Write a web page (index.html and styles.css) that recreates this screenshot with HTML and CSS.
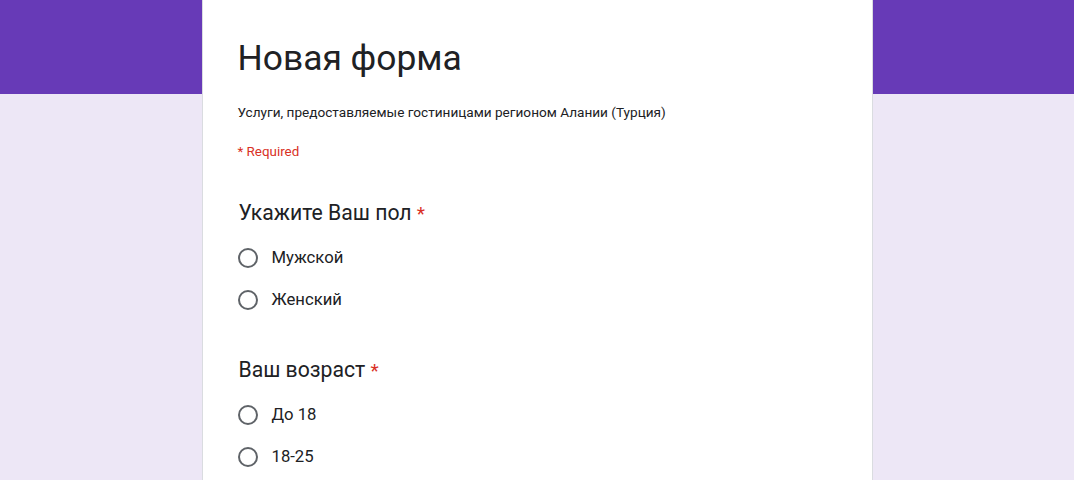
FILE: index.html
```html
<!DOCTYPE html>
<html lang="ru">
<head>
<meta charset="utf-8">
<title>Новая форма</title>
<link rel="stylesheet" href="styles.css">
</head>
<body>
<main class="card">
  <h1 class="title">Новая форма</h1>
  <p class="desc">Услуги, предоставляемые гостиницами регионом Алании (Турция)</p>
  <p class="required">* Required</p>

  <section class="question">
    <h2 class="q-title">Укажите Ваш пол <span class="star">*</span></h2>
    <label class="option"><span class="radio"></span><span class="opt-text">Мужской</span></label>
    <label class="option"><span class="radio"></span><span class="opt-text">Женский</span></label>
  </section>

  <section class="question">
    <h2 class="q-title">Ваш возраст <span class="star">*</span></h2>
    <label class="option"><span class="radio"></span><span class="opt-text">До 18</span></label>
    <label class="option"><span class="radio"></span><span class="opt-text">18-25</span></label>
  </section>
</main>
</body>
</html>
```

FILE: styles.css
```css
html, body {
  margin: 0;
  padding: 0;
}
body {
  height: 480px;
  overflow: hidden;
  background: linear-gradient(to bottom, #673ab7 0, #673ab7 94px, #ede7f6 94px, #ede7f6 100%);
  font-family: Roboto, "Noto Sans", Arial, sans-serif;
  color: #202124;
}
.card {
  box-sizing: border-box;
  width: 671px;
  height: 480px;
  margin: 0 auto;
  background: #fff;
  border-left: 1px solid #dadce0;
  border-right: 1px solid #dadce0;
  padding: 38px 35px 0 35px;
  overflow: hidden;
}
.title {
  margin: 0;
  font-size: 35.4px;
  line-height: 40px;
  font-weight: 400;
  color: #202124;
}
.desc {
  margin: 25px 0 0;
  font-size: 13.6px;
  line-height: 18px;
  color: #202124;
}
.required {
  margin: 22px 0 0;
  font-size: 13.4px;
  line-height: 18px;
  color: #d93025;
}
.question {
  margin-top: 40px;
  display: flex;
  flex-direction: column;
}
.question + .question {
  margin-top: 37px;
}
.q-title {
  margin: 0 0 11px 1px;
  font-size: 21.2px;
  line-height: 24px;
  font-weight: 400;
  color: #202124;
}
.star {
  color: #d93025;
  font-size: 19px;
}
.option {
  display: flex;
  align-items: center;
  height: 42px;
  gap: 14px;
}
.radio {
  box-sizing: border-box;
  width: 20px;
  height: 20px;
  border: 2px solid #5f6368;
  border-radius: 50%;
  flex: none;
}
.opt-text {
  font-size: 16.7px;
  line-height: 24px;
  color: #202124;
}
```
